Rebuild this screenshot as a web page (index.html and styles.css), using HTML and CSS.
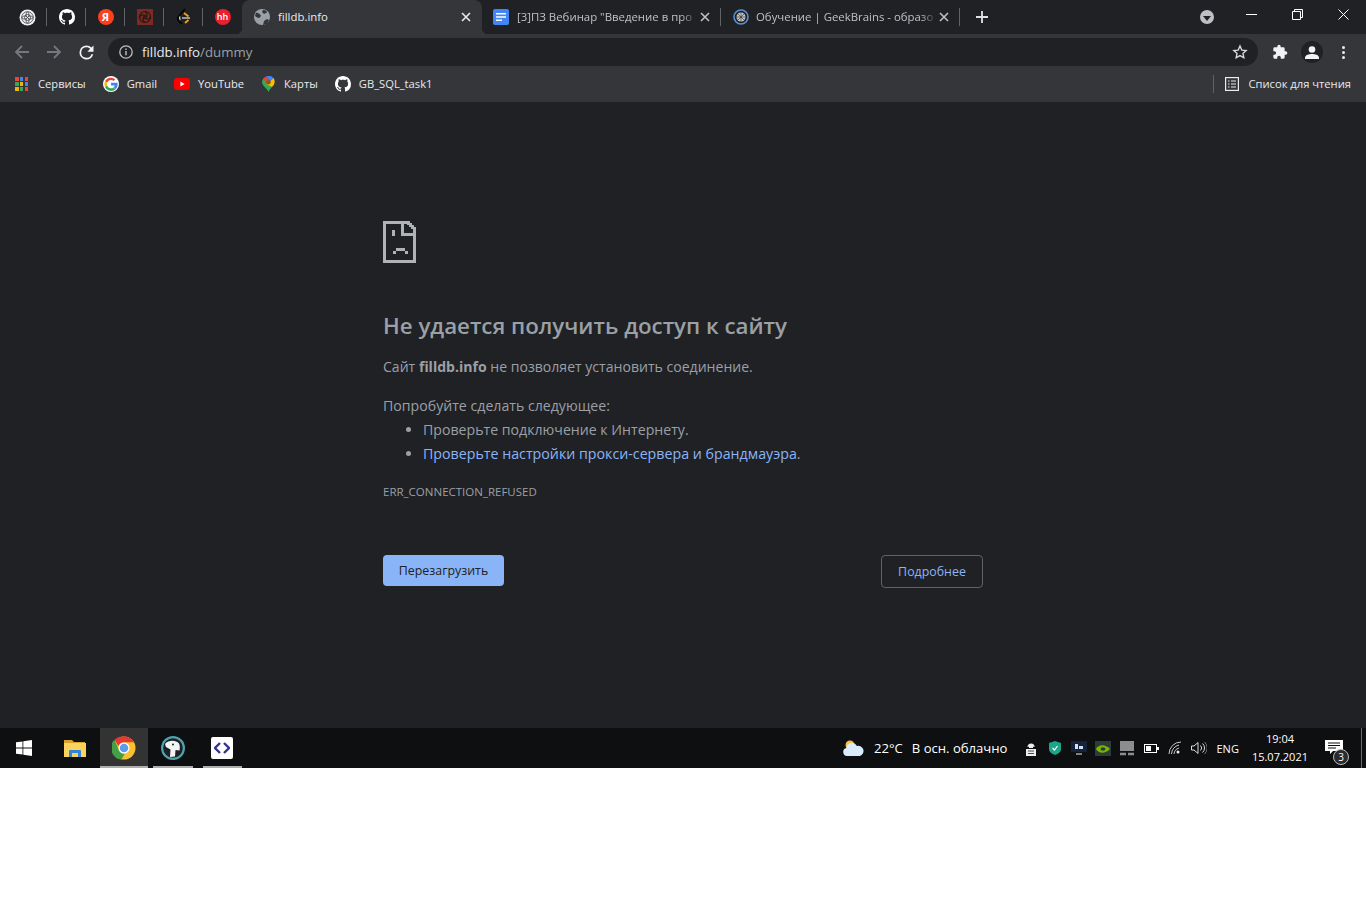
FILE: index.html
```html
<!DOCTYPE html>
<html lang="ru">

<head>
    <meta charset="UTF-8">
    <title>filldb.info</title>
    <link rel="stylesheet" href="styles.css">
</head>

<body>
    <svg class="defs" width="0" height="0">
        <symbol id="gh" viewBox="0 0 16 16">
            <path fill="#fff" d="M8 0C3.58 0 0 3.58 0 8c0 3.54 2.29 6.53 5.47 7.59.4.07.55-.17.55-.38 0-.19-.01-.82-.01-1.49-2.01.37-2.53-.49-2.69-.94-.09-.23-.48-.94-.82-1.13-.28-.15-.68-.52-.01-.53.63-.01 1.08.58 1.23.82.72 1.21 1.87.87 2.33.66.07-.52.28-.87.51-1.07-1.78-.2-3.64-.89-3.64-3.95 0-.87.31-1.59.82-2.15-.08-.2-.36-1.02.08-2.12 0 0 .67-.21 2.2.82.64-.18 1.32-.27 2-.27.68 0 1.36.09 2 .27 1.53-1.04 2.2-.82 2.2-.82.44 1.1.16 1.92.08 2.12.51.56.82 1.27.82 2.15 0 3.07-1.87 3.75-3.65 3.95.29.25.54.73.54 1.48 0 1.07-.01 1.93-.01 2.2 0 .21.15.46.55.38A8.013 8.013 0 0016 8c0-4.42-3.58-8-8-8z"/>
        </symbol>
        <symbol id="close" viewBox="0 0 10 10">
            <path d="M1 1l8 8M9 1l-8 8" fill="none" stroke="currentColor" stroke-width="1.6"/>
        </symbol>
    </svg>

    <div class="screen">
        <!-- tab strip -->
        <div class="tabstrip">
            <div class="pinned">
                <div class="pin">
                    <svg width="17" height="17" viewBox="0 0 17 17"><circle cx="8.5" cy="8.5" r="8" fill="#f1f1f1"/><g fill="none" stroke="#3a3b3e" stroke-width=".8"><circle cx="8.5" cy="8.5" r="5.800"/><circle cx="8.5" cy="8.500" r="3"/><path d="M8.5 2.700c-2 2-2 4 0 5.800 2-1.800 2-3.800 0-5.800zM2.700 8.500c2-2 4-2 5.800 0-1.800 2-3.800 2-5.800 0zM14.300 8.500c-2 2-4 2-5.800 0 1.800-2 3.800-2 5.800 0zM8.500 14.300c2-2 2-4 0-5.800-2 1.800-2 3.800 0 5.800z"/></g></svg>
                </div>
                <div class="pin">
                    <svg width="16" height="16"><use href="#gh"/></svg>
                </div>
                <div class="pin">
                    <span class="fav-ya">Я</span>
                </div>
                <div class="pin">
                    <svg width="16" height="16" viewBox="0 0 16 16"><rect width="16" height="16" fill="#7c2a26"/><g fill="none" stroke="#2a1715" stroke-width="1.2"><circle cx="8" cy="8" r="5.5"/><path d="M8 2.500a4 4 0 0 1 0 7M13.500 8a4 4 0 0 1-7 0M8 13.500a4 4 0 0 1 0-7M2.500 8a4 4 0 0 1 7 0"/></g></svg>
                </div>
                <div class="pin">
                    <svg width="14" height="18" viewBox="0 0 14 18"><path d="M8 1L2 8a3.600 3.600 0 0 0 0 5l3 3" fill="none" stroke="#050505" stroke-width="1.800"/><path d="M3 8.500a3 3 0 0 0 .3 3.500" fill="none" stroke="#e8e8e8" stroke-width="1.200"/><path d="M7 5l4.500 3.500M11.500 12L8 15" fill="none" stroke="#f0a020" stroke-width="1.800"/><path d="M5 10h8" stroke="#c8c8c8" stroke-width="1.400"/></svg>
                </div>
                <div class="pin pin-last">
                    <span class="fav-hh">hh</span>
                </div>
            </div>

            <div class="tab tab-active">
                <svg class="tab-fav" width="16" height="16" viewBox="0 0 16 16"><circle cx="8" cy="8" r="8" fill="#9aa0a6"/><path d="M2 3.500l3 1 2 2-1 2-2 .5-3-2zM9 16l1-4 3-2 2 1-2 4zM9 1l3 .5 1 2-3 1.500-2-2z" fill="#35363a"/></svg>
                <span class="tab-title">filldb.info</span>
                <svg class="tab-x" width="10" height="10"><use href="#close"/></svg>
            </div>

            <div class="tab tab-docs">
                <svg class="tab-fav" width="16" height="16" viewBox="0 0 16 16"><rect width="16" height="16" rx="2" fill="#4285f4"/><path d="M3 4h10v1.500H3zM3 7.200h10v1.500H3zM3 10.500h6V12H3z" fill="#fff"/></svg>
                <span class="tab-title tab-fade">[3]ПЗ Вебинар "Введение в про</span>
                <svg class="tab-x" width="10" height="10"><use href="#close"/></svg>
            </div>

            <div class="tab tab-gb">
                <svg class="tab-fav" width="16" height="16" viewBox="0 0 16 16"><circle cx="8" cy="8" r="7" fill="none" stroke="#5b8fd8" stroke-width="1.600"/><circle cx="8" cy="8" r="4.500" fill="#c9c9c9"/><path d="M8 3.500v9M3.500 8h9M5 5l6 6M11 5l-6 6" stroke="#3a3b3f" stroke-width=".7"/></svg>
                <span class="tab-title tab-fade">Обучение | GeekBrains - образо</span>
                <svg class="tab-x" width="10" height="10"><use href="#close"/></svg>
            </div>

            <svg class="newtab" width="12" height="12" viewBox="0 0 12 12"><path d="M6 0v12M0 6h12" stroke="#dee1e6" stroke-width="1.800"/></svg>

            <div class="strip-right">
                <div class="tabsearch"><span class="tabsearch-arrow"></span></div>
                <div class="winbtn">
                    <svg width="11" height="11" viewBox="0 0 11 11"><path d="M0 5.500h11" stroke="#fff" stroke-width="1"/></svg>
                </div>
                <div class="winbtn">
                    <svg width="11" height="11" viewBox="0 0 11 11"><path d="M.5 2.500h8v8h-8zM2.500 2.500v-2h8v8h-2" fill="none" stroke="#fff" stroke-width="1"/></svg>
                </div>
                <div class="winbtn">
                    <svg width="11" height="11" viewBox="0 0 11 11"><path d="M.5.500l10 10M10.500.500l-10 10" fill="none" stroke="#fff" stroke-width="1"/></svg>
                </div>
            </div>
        </div>

        <!-- address bar -->
        <div class="toolbar">
            <svg class="nav" width="16" height="16" viewBox="0 0 16 16"><path d="M15 8H2M8 2L2 8l6 6" fill="none" stroke="#74777c" stroke-width="1.800"/></svg>
            <svg class="nav" width="16" height="16" viewBox="0 0 16 16"><path d="M1 8h13M8 2l6 6-6 6" fill="none" stroke="#74777c" stroke-width="1.800"/></svg>
            <svg class="nav nav-reload" width="21" height="21" viewBox="0 0 24 24"><path fill="#f1f3f4" d="M17.650 6.350A7.960 7.960 0 0 0 12 4a8 8 0 1 0 7.730 10h-2.080A6 6 0 1 1 12 6c1.660 0 3.140.69 4.220 1.780L13 11h7V4l-2.350 2.350z"/></svg>
            <div class="omnibox">
                <svg width="14" height="14" viewBox="0 0 14 14"><circle cx="7" cy="7" r="6.200" fill="none" stroke="#bdc1c6" stroke-width="1.300"/><path d="M7 6v4.200M7 3.500v1.400" stroke="#bdc1c6" stroke-width="1.400"/></svg>
                <span class="url">filldb.info<span class="url-path">/dummy</span></span>
                <svg class="star" width="16" height="16" viewBox="0 0 24 24"><path fill="none" stroke="#dadce0" stroke-width="2" d="M12 3l2.700 6.100 6.600.7-4.900 4.400 1.400 6.500L12 17.400l-5.800 3.300 1.400-6.500-4.900-4.400 6.600-.7z"/></svg>
            </div>
            <svg class="puzzle" width="16" height="16" viewBox="0 0 24 24"><path fill="#f1f3f4" d="M20.500 11H19V7a2 2 0 0 0-2-2h-4V3.500a2.500 2.500 0 0 0-5 0V5H4a2 2 0 0 0-2 2v3.800h1.500a2.700 2.700 0 0 1 0 5.400H2V20a2 2 0 0 0 2 2h3.800v-1.500a2.700 2.700 0 0 1 5.400 0V22H17a2 2 0 0 0 2-2v-4h1.500a2.500 2.500 0 0 0 0-5z"/></svg>
            <div class="avatar">
                <svg width="14" height="13" viewBox="0 0 14 13"><circle cx="7" cy="3.500" r="3.300" fill="#f1f3f4"/><path fill="#f1f3f4" d="M0 13v-1.500C0 9 4 8 7 8s7 1 7 3.500V13z"/></svg>
            </div>
            <div class="dots"><i></i><i></i><i></i></div>
        </div>

        <!-- bookmarks -->
        <div class="bookmarks">
            <div class="bm bm-apps">
                <svg width="13" height="14" viewBox="0 0 13 14" shape-rendering="crispEdges">
                    <rect x="0" y="0" width="3.500" height="4" fill="#e8453c"/><rect x="4.700" y="0" width="3.500" height="4" fill="#4285f4"/><rect x="9.500" y="0" width="3.500" height="4" fill="#e8453c"/>
                    <rect x="0" y="5" width="3.500" height="4" fill="#34a853"/><rect x="4.700" y="5" width="3.500" height="4" fill="#f4b400"/><rect x="9.500" y="5" width="3.500" height="4" fill="#4285f4"/>
                    <rect x="0" y="10" width="3.500" height="4" fill="#f4b400"/><rect x="4.700" y="10" width="3.500" height="4" fill="#34a853"/><rect x="9.500" y="10" width="3.500" height="4" fill="#e8453c"/>
                </svg>
                <span>Сервисы</span>
            </div>
            <div class="bm">
                <svg width="16" height="16" viewBox="0 0 48 48"><circle cx="24" cy="24" r="24" fill="#fff"/><path fill="#ea4335" d="M24 12c3 0 5.600 1 7.700 3l5.400-5.400A21 21 0 0 0 6 15.200l6.500 5C14 15.500 18.600 12 24 12z"/><path fill="#4285f4" d="M44 24.500c0-1.500-.1-2.900-.4-4.300H24v8.200h11.300a9.600 9.600 0 0 1-4.200 6.300l6.400 5C41.300 36.200 44 30.900 44 24.500z"/><path fill="#fbbc05" d="M12.500 28.300a12 12 0 0 1 0-8l-6.500-5a21 21 0 0 0 0 18z"/><path fill="#34a853" d="M24 45c5.700 0 10.400-1.900 13.500-5.100l-6.400-5c-1.800 1.200-4 1.900-7.100 1.900-5.400 0-10-3.600-11.500-8.500l-6.500 5A21 21 0 0 0 24 45z"/></svg>
                <span>Gmail</span>
            </div>
            <div class="bm">
                <svg width="16" height="12" viewBox="0 0 16 12"><rect width="16" height="12" rx="3" fill="#f00"/><path d="M6.400 3.500L10.600 6l-4.200 2.500z" fill="#fff"/></svg>
                <span>YouTube</span>
            </div>
            <div class="bm bm-maps">
                <svg width="13" height="16" viewBox="0 0 13 16"><path fill="#34a853" d="M6.500 16C5.500 13 0 9.500 0 6.300a6.500 6.500 0 0 1 1.500-4.100L10 11c-1.500 1.800-3 3-3.500 5z"/><path fill="#4285f4" d="M4 .5A6.500 6.500 0 0 1 11.500 2L8.500 5z"/><path fill="#ea4335" d="M1.500 2.200A6.500 6.500 0 0 1 4 .5L8.500 5 4.500 8z"/><path fill="#fbbc05" d="M11.500 2A6.500 6.500 0 0 1 10 11L4.500 8 8.500 5z"/><circle cx="6.500" cy="6.300" r="2.200" fill="#8a5a14"/></svg>
                <span>Карты</span>
            </div>
            <div class="bm">
                <svg width="16" height="16"><use href="#gh"/></svg>
                <span>GB_SQL_task1</span>
            </div>
            <div class="readlist">
                <svg width="14" height="14" viewBox="0 0 14 14"><rect x=".6" y=".6" width="12.800" height="12.800" fill="none" stroke="#e8eaed" stroke-width="1.200"/><path d="M3 4h1.500M3 7h1.500M3 10h1.500M6 4h5M6 7h5M6 10h5" stroke="#e8eaed" stroke-width="1.200"/></svg>
                <span>Список для чтения</span>
            </div>
        </div>

        <!-- error page -->
        <main class="page">
            <div class="error">
                <svg class="sad" width="33" height="42" viewBox="0 0 33 42" shape-rendering="crispEdges">
                    <path fill="#b0b3b6" fill-rule="evenodd" d="M0 0h27v2h2v2h2v2h2v36H0zM3 3v36h27V15H18V3zM21 3v9h9V8h-2V6h-2V4h-2V3z"/>
                    <path fill="#b0b3b6" d="M9 9h3v6H9zM10 30h3v3h-3zM13 27h9v3h-9zM22 30h3v3h-3z"/>
                </svg>
                <h1 class="err-title">Не удается получить доступ к сайту</h1>
                <p class="err-line">Сайт <b>filldb.info</b> не позволяет установить соединение.</p>
                <p class="err-try">Попробуйте сделать следующее:</p>
                <ul class="err-list">
                    <li>Проверьте подключение к Интернету.</li>
                    <li><a class="err-link">Проверьте настройки прокси-сервера и брандмауэра</a>.</li>
                </ul>
                <div class="err-code">ERR_CONNECTION_REFUSED</div>
                <div class="err-buttons">
                    <button class="btn-reload">Перезагрузить</button>
                    <button class="btn-details">Подробнее</button>
                </div>
            </div>
        </main>

        <!-- windows taskbar -->
        <div class="taskbar">
            <div class="start">
                <svg width="16" height="16" viewBox="0 0 16 16"><path fill="#fff" d="M0 2.300l6.500-.9v6.200H0zM7.300 1.300L16 0v7.600H7.300zM0 8.400h6.500v6.200L0 13.700zM7.300 8.400H16V16l-8.700-1.200z"/></svg>
            </div>
            <div class="task task-files">
                <svg width="22" height="18" viewBox="0 0 22 18"><path fill="#d8a02c" d="M0 1h8l2 2h11v3H0z"/><path fill="#fbd25e" d="M0 4h22v14H0z"/><path fill="#2f86d6" d="M5 18v-6a1 1 0 0 1 1-1h10a1 1 0 0 1 1 1v6h-3v-4H8v4z"/></svg>
            </div>
            <div class="task task-on">
                <svg width="24" height="24" viewBox="0 0 48 48"><circle cx="24" cy="24" r="23" fill="#fbc02d"/><path fill="#e53935" d="M24 1a23 23 0 0 1 20 11.500H24a11.500 11.500 0 0 0-11 8L5 7.600A23 23 0 0 1 24 1z"/><path fill="#43a047" d="M5 7.600l9.800 23a11.500 11.500 0 0 0 10.700 4.900L19 47A23 23 0 0 1 5 7.600z"/><circle cx="24" cy="24" r="11" fill="#fff"/><circle cx="24" cy="24" r="8.500" fill="#5b9bf0"/></svg>
            </div>
            <div class="task task-open">
                <svg width="24" height="24" viewBox="0 0 24 24"><circle cx="12" cy="12" r="12" fill="#4fa3ad"/><circle cx="12" cy="12" r="9.800" fill="#1d2024"/><path fill="#f2f4f4" d="M4 8c3-4 11-4.500 14-.5 1 2 1 5 .5 7l-4-.5-.5 6.500-5 .5 .5-7.500L5 11z"/><circle cx="12" cy="8.500" r="1" fill="#1d2024"/></svg>
            </div>
            <div class="task task-open">
                <div class="devicon">
                    <svg width="16" height="12" viewBox="0 0 16 12"><path d="M6 1L1 6l5 5M10 1l5 5-5 5" fill="none" stroke="#34348c" stroke-width="2.400"/></svg>
                </div>
            </div>

            <div class="tray">
                <svg class="tray-weather" width="21" height="16" viewBox="0 0 21 16"><circle cx="7" cy="5" r="4.500" fill="#f5c24b"/><path fill="#d9ecfa" d="M4 16a4 4 0 0 1-.6-7.900A5.500 5.500 0 0 1 13.800 6a4.500 4.500 0 0 1 3 10z"/></svg>
                <span class="tray-text">22°C</span>
                <span class="tray-text tray-gap">В осн. облачно</span>
                <div class="tray-icons">
                    <svg width="12" height="15" viewBox="0 0 12 15"><path fill="none" stroke="#eee" stroke-width="1.200" d="M3 6a3 3 0 0 1 6 0"/><path fill="#eee" d="M4 3h4v4H4zM1 8h10v7H1z"/><path d="M3 10h6M3 12.500h6" stroke="#222" stroke-width=".8"/></svg>
                    <svg width="12" height="14" viewBox="0 0 12 14"><path fill="#1da58a" d="M6 0l6 2v6c0 3-3 5-6 6-3-1-6-3-6-6V2z"/><path d="M3.500 7l2 2 3-4" fill="none" stroke="#fff" stroke-width="1.200"/></svg>
                    <svg width="16" height="14" viewBox="0 0 16 14"><rect width="16" height="11" fill="#16223c"/><path fill="#cfe0f5" d="M4 3h3v5H4zM8 5h4v3H8z"/><path d="M5 13h6" stroke="#aaa" stroke-width="1.500"/></svg>
                    <svg width="16" height="15" viewBox="0 0 16 15"><rect width="16" height="15" fill="#2f3a3a"/><path fill="#76b900" d="M1 8c3-5 9-5 14 0-5 5-11 5-14 0z"/><ellipse cx="8" cy="8" rx="2.500" ry="1.800" fill="#2f3a3a"/></svg>
                    <svg width="14" height="15" viewBox="0 0 14 15"><rect width="14" height="10" fill="#8d8d8d"/><path d="M0 13h6M8 13h6" stroke="#8d8d8d" stroke-width="2.500"/></svg>
                    <svg width="15" height="9" viewBox="0 0 15 9"><rect x=".5" y=".5" width="12" height="8" fill="none" stroke="#fff"/><rect x="2" y="2" width="5" height="5" fill="#fff"/><rect x="13" y="3" width="2" height="3" fill="#fff"/></svg>
                    <svg width="14" height="14" viewBox="0 0 14 14"><g fill="none" stroke="#c8c8c8" stroke-width="1"><path d="M1 13a12 12 0 0 1 12-12M3.500 13A9.500 9.500 0 0 1 11 4M6 13a7 7 0 0 1 5-6"/></g><circle cx="10" cy="11" r="1.500" fill="#eee"/></svg>
                    <svg width="16" height="14" viewBox="0 0 16 14"><path fill="none" stroke="#ddd" d="M.5 5H3l4-3.500v11L3 9H.5zM9.500 4.500a3.500 3.500 0 0 1 0 5M11.500 2.500a6 6 0 0 1 0 9"/><path fill="none" stroke="#777" d="M13.500 1a8 8 0 0 1 0 12"/></svg>
                </div>
                <span class="tray-lang">ENG</span>
                <div class="clock">
                    <span>19:04</span>
                    <span>15.07.2021</span>
                </div>
                <div class="notif">
                    <svg class="notif-icon" width="18" height="14" viewBox="0 0 18 14"><path fill="#fff" d="M0 0h18v11H8l-3 3v-3H0z"/><path d="M3 3h12M3 5.500h12M3 8h8" stroke="#0e0e0e" stroke-width="1"/></svg>
                    <span class="notif-badge">3</span>
                </div>
                <div class="show-desktop"></div>
            </div>
        </div>
    </div>
</body>

</html>
```

FILE: styles.css
```css
* {
    margin: 0;
    padding: 0;
    box-sizing: border-box;
}

body {
    background: #fff;
    font-family: "Open Sans", "Noto Sans", sans-serif;
    height: 904px;
    overflow: hidden;
}

.defs {
    display: block;
    height: 0;
}

.screen {
    display: flex;
    flex-direction: column;
    height: 768px;
}

/* tab strip */
.tabstrip {
    display: flex;
    align-items: stretch;
    height: 34px;
    background: #202124;
    color: #bdc1c6;
    font-size: 11.4px;
}

.pinned {
    display: flex;
    padding-left: 8px;
    width: 242px;
}

.pin {
    display: flex;
    align-items: center;
    justify-content: center;
    width: 39px;
    height: 34px;
    position: relative;
}

.pin::after {
    content: "";
    position: absolute;
    right: 0;
    top: 8px;
    width: 1px;
    height: 18px;
    background: #5f6368;
}

.pin-last::after {
    display: none;
}

.fav-ya {
    width: 16px;
    height: 16px;
    border-radius: 50%;
    background: #fc3f1d;
    color: #fff;
    font-size: 11px;
    font-weight: 700;
    line-height: 16px;
    text-align: center;
}

.fav-hh {
    width: 16px;
    height: 16px;
    border-radius: 50%;
    background: #e8212e;
    color: #fff;
    font-size: 9px;
    font-weight: 600;
    line-height: 16px;
    text-align: center;
}

.tab {
    display: flex;
    align-items: center;
    height: 34px;
    position: relative;
}

.tab-active {
    width: 240px;
    padding-left: 12px;
    background: #35363a;
    color: #e8eaed;
    border-radius: 8px 8px 0 0;
}

/* flared bottom corners of the active tab */
.tab-active::before,
.tab-active::after {
    content: "";
    position: absolute;
    bottom: 0;
    width: 6px;
    height: 6px;
}

.tab-active::before {
    left: -6px;
    background: radial-gradient(circle at 0 0, #202124 6px, #35363a 6.5px);
}

.tab-active::after {
    right: -6px;
    background: radial-gradient(circle at 100% 0, #202124 6px, #35363a 6.5px);
}

.tab-docs {
    width: 239px;
    padding-left: 11px;
}

.tab-gb {
    width: 239px;
    padding-left: 12px;
}

.tab-docs::after,
.tab-gb::after {
    content: "";
    position: absolute;
    right: 0;
    top: 8px;
    width: 1px;
    height: 18px;
    background: #5f6368;
}

.tab-fav {
    flex: none;
    margin-right: 8px;
}

.tab-gb .tab-fav {
    margin-right: 7px;
}

.tab-title {
    flex: 1;
    padding-bottom: 2px;
    white-space: nowrap;
}

.tab-fade {
    -webkit-mask-image: linear-gradient(to right, #000 90%, transparent 99%);
    mask-image: linear-gradient(to right, #000 90%, transparent 99%);
}

.tab-x {
    flex: none;
    margin-right: 11px;
}

.newtab {
    margin: 11px 0 0 16px;
}

.strip-right {
    display: flex;
    align-items: flex-start;
    margin-left: auto;
}

.tabsearch {
    width: 14px;
    height: 14px;
    margin: 10px 14px 0 0;
    border-radius: 50%;
    background: #bdc1c6;
    display: flex;
    align-items: center;
    justify-content: center;
}

.tabsearch-arrow {
    width: 0;
    height: 0;
    margin-top: 2px;
    border-left: 4px solid transparent;
    border-right: 4px solid transparent;
    border-top: 5px solid #202124;
}

.winbtn {
    display: flex;
    justify-content: center;
    width: 46px;
    padding-top: 9px;
}

/* address bar */
.toolbar {
    display: flex;
    align-items: center;
    height: 32px;
    padding: 4px 0 0 14px;
    background: #35363a;
}

.nav {
    flex: none;
    margin-right: 16px;
}

.nav-reload {
    margin-left: -2.5px;
    margin-right: 13.5px;
}

.omnibox {
    display: flex;
    align-items: center;
    width: 1150px;
    height: 28px;
    margin-left: -2px;
    padding: 0 10px 0 11px;
    border-radius: 14px;
    background: #202124;
    color: #e8eaed;
    font-size: 13.25px;
}

.url {
    margin-left: 9px;
}

.url-path {
    color: #9aa0a6;
}

.star {
    margin-left: auto;
}

.puzzle {
    margin-left: 14px;
}

.avatar {
    display: flex;
    align-items: center;
    justify-content: center;
    width: 22px;
    height: 22px;
    margin-left: 13px;
    border-radius: 50%;
    background: #202124;
}

.dots {
    display: flex;
    flex-direction: column;
    gap: 2px;
    margin-left: 19px;
}

.dots i {
    display: block;
    width: 3px;
    height: 3px;
    border-radius: 50%;
    background: #e8eaed;
}

/* bookmarks */
.bookmarks {
    display: flex;
    align-items: center;
    height: 36px;
    padding: 0 15px;
    background: #35363a;
    color: #e8eaed;
    font-size: 11.2px;
}

.bookmarks span {
    padding-bottom: 2px;
}

.bm {
    display: flex;
    align-items: center;
    gap: 8px;
    margin-right: 17px;
}

.bm-apps {
    gap: 10px;
}

.bm-maps {
    gap: 9px;
    margin-left: 1px;
}

.readlist {
    display: flex;
    align-items: center;
    gap: 9px;
    margin-left: auto;
    padding-left: 11px;
    border-left: 1px solid #5f6368;
    height: 18px;
}

/* error page */
.page {
    flex: 1;
    padding-top: 119px;
    background: #202124;
}

.error {
    width: 600px;
    margin-left: 383px;
    color: #9aa0a6;
    font-size: 14.15px;
}

.sad {
    display: block;
}

.err-title {
    margin-top: 46px;
    color: #9aa0a6;
    font-size: 22.3px;
    font-weight: 600;
    line-height: 34px;
}

.err-line {
    margin-top: 12px;
    font-size: 14.07px;
    line-height: 24px;
}

.err-try {
    margin-top: 15px;
    line-height: 24px;
}

.err-list {
    padding-left: 40px;
}

.err-list li {
    line-height: 24px;
}

.err-link {
    color: #8ab4f8;
    font-size: 14.22px;
}

.err-code {
    margin-top: 18px;
    font-size: 11.5px;
    line-height: 15px;
}

.err-buttons {
    display: flex;
    align-items: flex-start;
    justify-content: space-between;
    margin-top: 56px;
}

.btn-reload {
    width: 121px;
    height: 31px;
    border: 0;
    border-radius: 4px;
    background: #8ab4f8;
    color: #202124;
    font: 12.4px "Open Sans", sans-serif;
}

.btn-details {
    width: 102px;
    height: 33px;
    border: 1px solid #5f6368;
    border-radius: 4px;
    background: transparent;
    color: #8ab4f8;
    font: 12.4px "Open Sans", sans-serif;
}

/* taskbar */
.taskbar {
    display: flex;
    align-items: stretch;
    height: 40px;
    background: #0e0f10;
    color: #fff;
}

.start {
    display: flex;
    align-items: center;
    justify-content: center;
    width: 48px;
}

.task {
    display: flex;
    align-items: center;
    justify-content: center;
    width: 49.5px;
    position: relative;
}

.task-files {
    width: 52px;
    padding-left: 1px;
}

.task-on {
    width: 48px;
    background: #333;
}

.task-on::after,
.task-open::after {
    content: "";
    position: absolute;
    left: 5px;
    right: 5px;
    bottom: 0;
    height: 2px;
    background: #aeaeae;
}

.task-on::after {
    left: 0;
    right: 0;
}

.devicon {
    display: flex;
    align-items: center;
    justify-content: center;
    width: 22px;
    height: 22px;
    border-radius: 2px;
    background: #fff;
}

.tray {
    display: flex;
    align-items: center;
    margin-left: auto;
}

.tray-weather {
    margin-right: 10px;
}

.tray-text {
    font-size: 13.1px;
}

.tray-gap {
    margin-left: 9px;
}

.tray-icons {
    display: grid;
    grid-template-columns: repeat(8, 24px);
    justify-items: center;
    align-items: center;
    margin-left: 12px;
}

.tray-lang {
    margin-left: 5px;
    font-size: 11px;
}

.clock {
    display: flex;
    flex-direction: column;
    align-items: center;
    margin-left: 13px;
    font-size: 11px;
    line-height: 18px;
}

.notif {
    position: relative;
    margin-left: 17px;
    width: 36px;
    height: 20px;
}

.notif-icon {
    display: block;
    margin-top: 2px;
}

.notif-badge {
    position: absolute;
    left: 8px;
    top: 11px;
    width: 16px;
    height: 16px;
    border-radius: 50%;
    background: #2b2b2b;
    border: 1px solid #bbb;
    font-size: 10px;
    line-height: 14px;
    text-align: center;
}

.show-desktop {
    width: 1px;
    height: 40px;
    margin-right: 4px;
    background: #6a6a6a;
}
```
